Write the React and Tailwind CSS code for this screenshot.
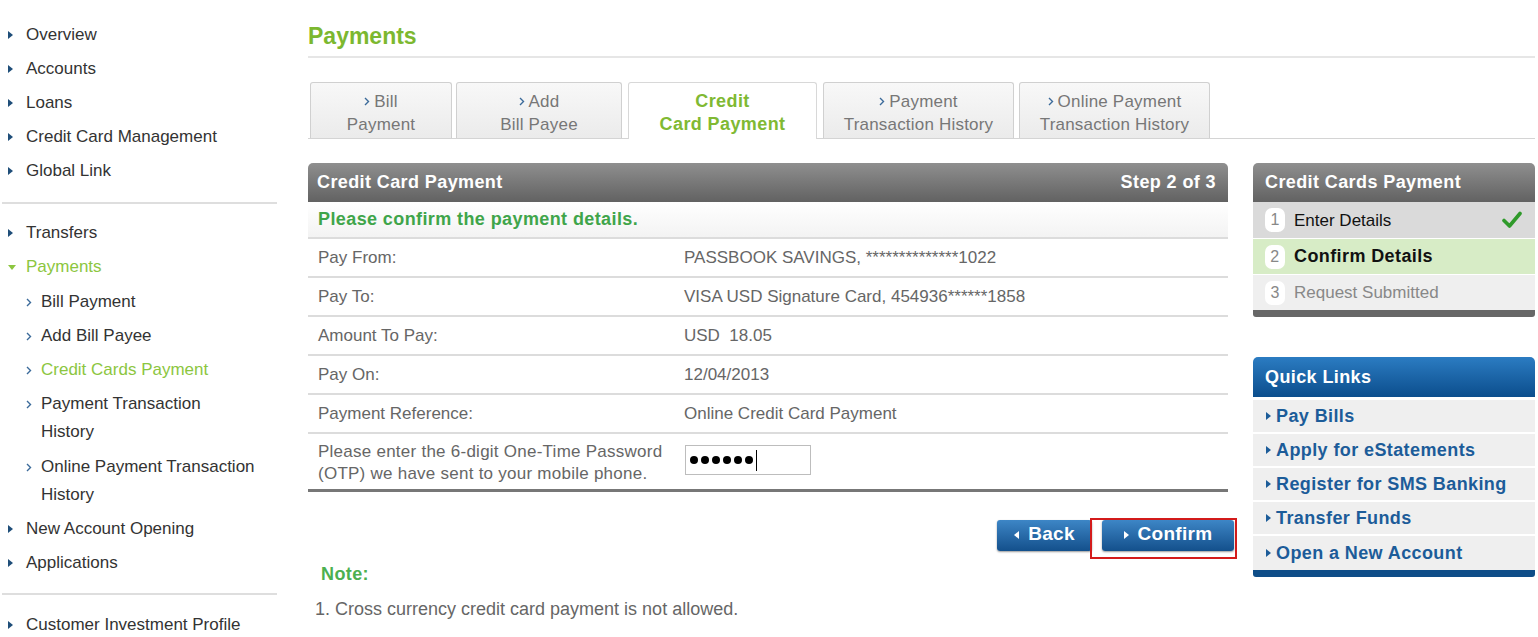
import React from 'react';

const Tri = ({ className = '' }) => (
  <svg width="5" height="8" viewBox="0 0 5 8" className={className}>
    <path d="M0 0L5 4L0 8Z" fill="currentColor" />
  </svg>
);

const TriDown = ({ className = '' }) => (
  <svg width="8" height="5" viewBox="0 0 8 5" className={className}>
    <path d="M0 0L8 0L4 5Z" fill="currentColor" />
  </svg>
);

const Chev = ({ className = '' }) => (
  <svg width="6" height="9" viewBox="0 0 6 9" className={className}>
    <path d="M1 1L4.5 4.5L1 8" fill="none" stroke="currentColor" strokeWidth="1.4" />
  </svg>
);

const TriLeft = ({ className = '' }) => (
  <svg width="5" height="8" viewBox="0 0 5 8" className={className}>
    <path d="M5 0L0 4L5 8Z" fill="currentColor" />
  </svg>
);

const mainMenu1 = ['Overview', 'Accounts', 'Loans', 'Credit Card Management', 'Global Link'];

const MainItem = ({ label }) => (
  <div className="flex items-center py-[3px] pl-[8px] leading-[28px] text-[17px] text-[#333]">
    <Tri className="text-[#1f4e79] mr-[13px] shrink-0" />
    <span>{label}</span>
  </div>
);

const SubItem = ({ children, active, extra = '' }) => (
  <div className={`flex items-start py-[3px] pl-[26px] leading-[28px] text-[17px] ${extra} ${active ? 'text-[#8cc63f]' : 'text-[#333]'}`}>
    <Chev className="text-[#3b6a9a] mr-[9px] mt-[10px] shrink-0" />
    <span>{children}</span>
  </div>
);

const Sidebar = () => (
  <aside className="w-[277px] shrink-0 pt-[18px]">
    {mainMenu1.map((m) => <MainItem key={m} label={m} />)}
    <div className="h-[2px] bg-[#dedede] ml-[2px] mt-[14px] mb-[12px]" />
    <MainItem label="Transfers" />
    <div className="flex items-center pt-[3px] pb-[4px] pl-[8px] leading-[28px] text-[17px] text-[#8cc63f]">
      <TriDown className="text-[#8cc63f] mr-[10px] shrink-0" />
      <span>Payments</span>
    </div>
    <SubItem>Bill Payment</SubItem>
    <SubItem>Add Bill Payee</SubItem>
    <SubItem active>Credit Cards Payment</SubItem>
    <SubItem>Payment Transaction<br />History</SubItem>
    <SubItem extra="mt-[1px]">Online Payment Transaction<br />History</SubItem>
    <MainItem label="New Account Opening" />
    <MainItem label="Applications" />
    <div className="h-[2px] bg-[#dedede] ml-[2px] mt-[13px] mb-[13px]" />
    <MainItem label="Customer Investment Profile" />
  </aside>
);

const tabs = [
  { l1: 'Bill', l2: 'Payment', w: 'w-[142px]', ml: 'ml-[2px]' },
  { l1: 'Add', l2: 'Bill Payee', w: 'w-[166px]', ml: 'ml-[4px]' },
  { l1: 'Credit', l2: 'Card Payment', w: 'w-[189px]', ml: 'ml-[6px]', active: true },
  { l1: 'Payment', l2: 'Transaction History', w: 'w-[191px]', ml: 'ml-[6px]' },
  { l1: 'Online Payment', l2: 'Transaction History', w: 'w-[191px]', ml: 'ml-[5px]' },
];

const Tabs = () => (
  <div className="flex items-end mt-[24px] border-b border-[#d4d4d4]">
    {tabs.map((t) =>
      t.active ? (
        <div key={t.l1} className={`${t.w} ${t.ml} h-[57px] -mb-px bg-white border border-b-0 border-[#d8d8d8] rounded-t-[3px] pt-[7px] text-center leading-[23px] text-[18px] tracking-[0.4px] font-bold text-[#80b933]`}>
          <div>{t.l1}</div>
          <div>{t.l2}</div>
        </div>
      ) : (
        <div key={t.l1} className={`${t.w} ${t.ml} h-[56px] bg-linear-to-b from-[#f8f8f8] to-[#ebebeb] border border-b-0 border-[#d0d0d0] rounded-t-[3px] pt-[7px] text-center leading-[23px] text-[17px] tracking-[0.2px] text-[#777]`}>
          <div className="flex items-center justify-center">
            <Chev className="text-[#3b6a9a] mr-[4px]" />
            <span>{t.l1}</span>
          </div>
          <div>{t.l2}</div>
        </div>
      )
    )}
  </div>
);

const rows = [
  ['Pay From:', 'PASSBOOK SAVINGS, **************1022'],
  ['Pay To:', 'VISA USD Signature Card, 454936******1858'],
  ['Amount To Pay:', 'USD  18.05'],
  ['Pay On:', '12/04/2013'],
  ['Payment Reference:', 'Online Credit Card Payment'],
];

const DetailPanel = () => (
  <div className="w-[920px] shrink-0">
    <div className="h-[39px] rounded-t-[5px] bg-linear-to-b from-[#8f8f8f] to-[#626262] flex items-center justify-between pl-[9px] pr-[12px] text-[18px] tracking-[0.4px] font-bold text-white">
      <span>Credit Card Payment</span>
      <span>Step 2 of 3</span>
    </div>
    <div className="h-[37px] flex items-center pl-[10px] bg-linear-to-b from-white to-[#f3f3f3] border-b-2 border-[#dcdcdc] text-[18px] tracking-[0.4px] font-bold text-[#3fa54a]">
      Please confirm the payment details.
    </div>
    {rows.map(([k, v]) => (
      <div key={k} className="h-[39px] flex items-center border-b-2 border-[#dcdcdc] text-[17px] text-[#666]">
        <div className="w-[376px] pl-[10px] shrink-0">{k}</div>
        <div className="whitespace-pre">{v}</div>
      </div>
    ))}
    <div className="h-[58px] flex items-start border-b-[3px] border-[#777] text-[17px] text-[#666]">
      <div className="w-[376px] pl-[10px] pt-[7px] leading-[22px] tracking-[0.25px] shrink-0">
        Please enter the 6-digit One-Time Password<br />(OTP) we have sent to your mobile phone.
      </div>
      <div className="mt-[11px] ml-[1px] w-[126px] h-[30px] border border-[#bdbdbd] flex items-center pl-[4px] gap-[3px]">
        {[0, 1, 2, 3, 4, 5].map((i) => (
          <span key={i} className="w-[8px] h-[8px] rounded-full bg-black" />
        ))}
        <span className="w-px h-[21px] bg-black" />
      </div>
    </div>
    <div className="flex justify-end items-start mt-[26px] -mr-[9px]">
      <button className="mt-[2px] -mr-[2px] w-[95px] h-[31px] rounded-[3px] bg-linear-to-b from-[#3d86c6] to-[#13508c] shadow-[0_1px_2px_rgba(0,0,0,0.4)] flex items-center justify-center pb-[3px] text-[19px] tracking-[0.3px] font-bold text-white">
        <TriLeft className="text-white mr-[9px] mt-[2px]" />
        Back
      </button>
      <div className="border-2 border-[#d41b1b] pl-[10px] pr-px pb-[6px] pt-0">
        <button className="w-[132px] h-[31px] rounded-[3px] bg-linear-to-b from-[#3d86c6] to-[#13508c] shadow-[0_1px_2px_rgba(0,0,0,0.4)] flex items-center justify-center pb-[3px] text-[19px] tracking-[0.3px] font-bold text-white">
          <Tri className="text-white mr-[9px] mt-[2px]" />
          Confirm
        </button>
      </div>
    </div>
    <div className="mt-[5px] pl-[13px] leading-[20px] text-[18px] tracking-[0.4px] font-bold text-[#4cb050]">Note:</div>
    <div className="mt-[15px] pl-[7px] leading-[20px] text-[18px] text-[#666]">
      1. Cross currency credit card payment is not allowed.
    </div>
  </div>
);

const Badge = ({ n }) => (
  <span className="w-[20px] h-[24px] rounded-[7px] bg-white flex items-center justify-center text-[16px] font-normal text-[#888] shrink-0">{n}</span>
);

const StepsBox = () => (
  <div>
    <div className="h-[39px] rounded-t-[5px] bg-linear-to-b from-[#8f8f8f] to-[#626262] flex items-center pl-[12px] text-[18px] tracking-[0.4px] font-bold text-white">
      Credit Cards Payment
    </div>
    <div className="h-[37px] bg-[#dadada] border-b border-white flex items-center pl-[12px] pr-[13px] text-[17px] text-[#111]">
      <Badge n="1" />
      <span className="ml-[9px] flex-1 pt-[1px]">Enter Details</span>
      <svg width="20" height="18" viewBox="0 0 20 18">
        <path d="M2 9.5L7.5 15L18 2.5" fill="none" stroke="#2f9a2a" strokeWidth="3.6" strokeLinecap="round" strokeLinejoin="round" />
      </svg>
    </div>
    <div className="h-[36px] bg-[#d7ecc6] border-b border-white flex items-center pl-[12px] text-[18px] tracking-[0.4px] font-bold text-[#111]">
      <Badge n="2" />
      <span className="ml-[9px]">Confirm Details</span>
    </div>
    <div className="h-[35px] bg-[#efefef] flex items-center pl-[12px] text-[17px] text-[#888]">
      <Badge n="3" />
      <span className="ml-[9px]">Request Submitted</span>
    </div>
    <div className="h-[7px] bg-[#676767] rounded-b-[3px]" />
  </div>
);

const links = ['Pay Bills', 'Apply for eStatements', 'Register for SMS Banking', 'Transfer Funds', 'Open a New Account'];

const QuickLinks = () => (
  <div className="mt-[40px]">
    <div className="h-[40px] rounded-t-[5px] bg-linear-to-b from-[#2b7cc2] to-[#0b4e8d] flex items-center pl-[12px] text-[18px] tracking-[0.4px] font-bold text-white">
      Quick Links
    </div>
    <div className="h-[3px] bg-white" />
    {links.map((l, i) => (
      <div key={l} className={`h-[34px] bg-[#efefef] flex items-center pl-[13px] text-[18px] tracking-[0.4px] font-bold text-[#1c5c99] ${i < links.length - 1 ? 'border-b-2 border-white' : ''}`}>
        <Tri className="text-[#1c5c99] mr-[5px] shrink-0" />
        <span>{l}</span>
      </div>
    ))}
    <div className="h-[7px] bg-[#0e4d88] rounded-b-[3px]" />
  </div>
);

export default function App() {
  return (
    <div className="w-[1538px] h-[637px] overflow-hidden bg-white flex font-['Liberation_Sans',Arial,sans-serif]">
      <Sidebar />
      <main className="ml-[31px] w-[1227px] shrink-0">
        <div className="pt-[22px] pb-[6px] leading-[28px] text-[23px] font-bold text-[#7cb82f] border-b-2 border-[#e6e6e6]">
          Payments
        </div>
        <Tabs />
        <div className="flex items-start mt-[24px]">
          <DetailPanel />
          <div className="w-[282px] ml-[25px] shrink-0">
            <StepsBox />
            <QuickLinks />
          </div>
        </div>
      </main>
    </div>
  );
}
